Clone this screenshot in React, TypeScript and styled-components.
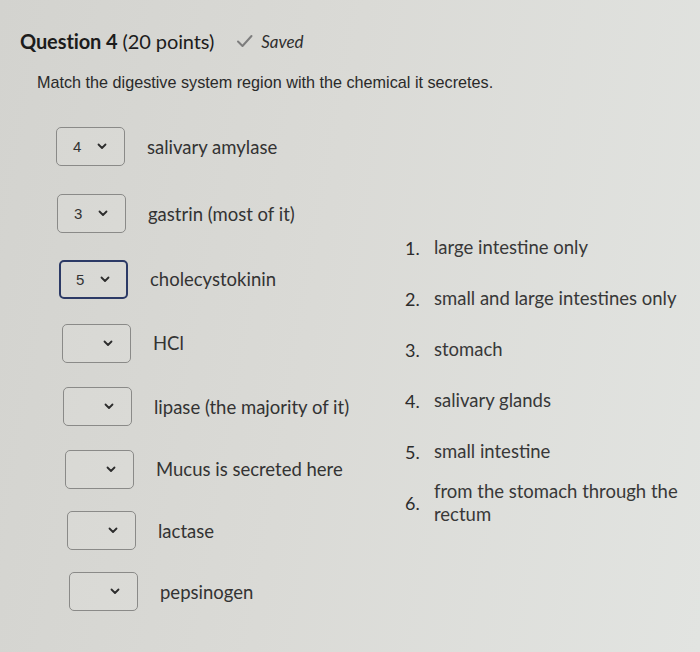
import React from "react";
import styled, { createGlobalStyle } from "styled-components";

const Global = createGlobalStyle`
  html, body { margin: 0; padding: 0; }
  body {
    width: 700px;
    height: 652px;
    overflow: hidden;
    background: linear-gradient(100deg, #d3d3cf 0%, #dadad6 45%, #e2e4e1 100%);
    font-family: Lato, "Noto Sans", sans-serif;
  }
`;

const Page = styled.div`
  box-sizing: border-box;
  min-height: 652px;
  padding: 24px 0 0 20px;
  color: #2f2f2f;
`;

const Header = styled.div`
  display: flex;
  align-items: center;
  height: 34px;
`;

const Title = styled.h2`
  margin: 0;
  font-family: Lato, sans-serif;
  font-size: 20px;
  font-weight: 400;
  color: #1c1c1c;
  letter-spacing: -0.1px;
  b { font-weight: 700; }
`;

const Saved = styled.span`
  display: flex;
  align-items: center;
  gap: 8px;
  margin-left: 22px;
  font-style: italic;
  font-size: 17px;
  color: #2e2e2e;
`;

const Prompt = styled.p`
  margin: 15px 0 0 17px;
  font-family: "Liberation Sans", Arial, sans-serif;
  font-size: 16.2px;
  line-height: 18px;
  color: #2a2a2a;
`;

const Body = styled.div`
  display: flex;
`;

const LeftCol = styled.div`
  width: 381px;
  padding-top: 22px;
  display: flex;
  flex-direction: column;
`;

const Row = styled.div<{ $h: number; $indent: number }>`
  display: flex;
  align-items: center;
  height: ${(p) => p.$h}px;
  padding-left: ${(p) => 36 + p.$indent}px;
`;

const SelectBox = styled.div<{ $focused?: boolean }>`
  box-sizing: border-box;
  width: 69px;
  height: 39px;
  border: ${(p) => (p.$focused ? "2px solid #2c3a66" : "1px solid #8a8a88")};
  border-radius: 5px;
  background: rgba(255, 255, 255, 0.08);
  display: flex;
  align-items: center;
  padding: 0 ${(p) => (p.$focused ? 16 : 17)}px 0 ${(p) => (p.$focused ? 15 : 16)}px;
  font-family: "Liberation Sans", Arial, sans-serif;
  font-size: 15px;
  color: #333;
`;

const SelValue = styled.span`
  flex: 1;
`;

const Label = styled.span`
  margin-left: 22px;
  font-size: 18.5px;
  color: #333;
`;

const RightCol = styled.ol`
  list-style: none;
  margin: 0;
  padding: 131px 0 0 0;
  display: flex;
  flex-direction: column;
`;

const Option = styled.li`
  display: flex;
  align-items: center;
  height: 51px;
  margin-left: 4px;
`;

const Num = styled.span`
  width: 29px;
  flex: none;
  font-size: 18px;
  color: #2c2c2c;
`;

const OptText = styled.span`
  font-size: 18.5px;
  line-height: 23px;
  color: #383838;
  max-width: 255px;
`;

const Chevron = () => (
  <svg width="10" height="7" viewBox="0 0 10 7">
    <path d="M1.5 1.5 L5 5 L8.5 1.5" fill="none" stroke="#2c2c2c" strokeWidth="1.8" strokeLinecap="round" strokeLinejoin="round" />
  </svg>
);

const Check = () => (
  <svg width="17" height="14" viewBox="0 0 17 14">
    <path d="M2 7.5 L6.5 12 L15.5 2" fill="none" stroke="#7d7d7d" strokeWidth="2" strokeLinecap="round" strokeLinejoin="round" />
  </svg>
);

const rows = [
  { value: "4", label: "salivary amylase", h: 67, indent: 0 },
  { value: "3", label: "gastrin (most of it)", h: 67, indent: 1 },
  { value: "5", label: "cholecystokinin", h: 64, indent: 3, focused: true },
  { value: "", label: "HCl", h: 64, indent: 6 },
  { value: "", label: "lipase (the majority of it)", h: 63, indent: 7 },
  { value: "", label: "Mucus is secreted here", h: 62, indent: 9 },
  { value: "", label: "lactase", h: 61, indent: 11 },
  { value: "", label: "pepsinogen", h: 61, indent: 13 },
];

const options = [
  "large intestine only",
  "small and large intestines only",
  "stomach",
  "salivary glands",
  "small intestine",
  "from the stomach through the rectum",
];

export default function App() {
  return (
    <>
      <Global />
      <Page>
        <Header>
          <Title>
            <b>Question 4</b> (20 points)
          </Title>
          <Saved>
            <Check />
            Saved
          </Saved>
        </Header>
        <Prompt>Match the digestive system region with the chemical it secretes.</Prompt>
        <Body>
          <LeftCol>
            {rows.map((r) => (
              <Row key={r.label} $h={r.h} $indent={r.indent}>
                <SelectBox $focused={r.focused}>
                  <SelValue>{r.value}</SelValue>
                  <Chevron />
                </SelectBox>
                <Label>{r.label}</Label>
              </Row>
            ))}
          </LeftCol>
          <RightCol>
            {options.map((o, i) => (
              <Option key={o}>
                <Num>{i + 1}.</Num>
                <OptText>{o}</OptText>
              </Option>
            ))}
          </RightCol>
        </Body>
      </Page>
    </>
  );
}
